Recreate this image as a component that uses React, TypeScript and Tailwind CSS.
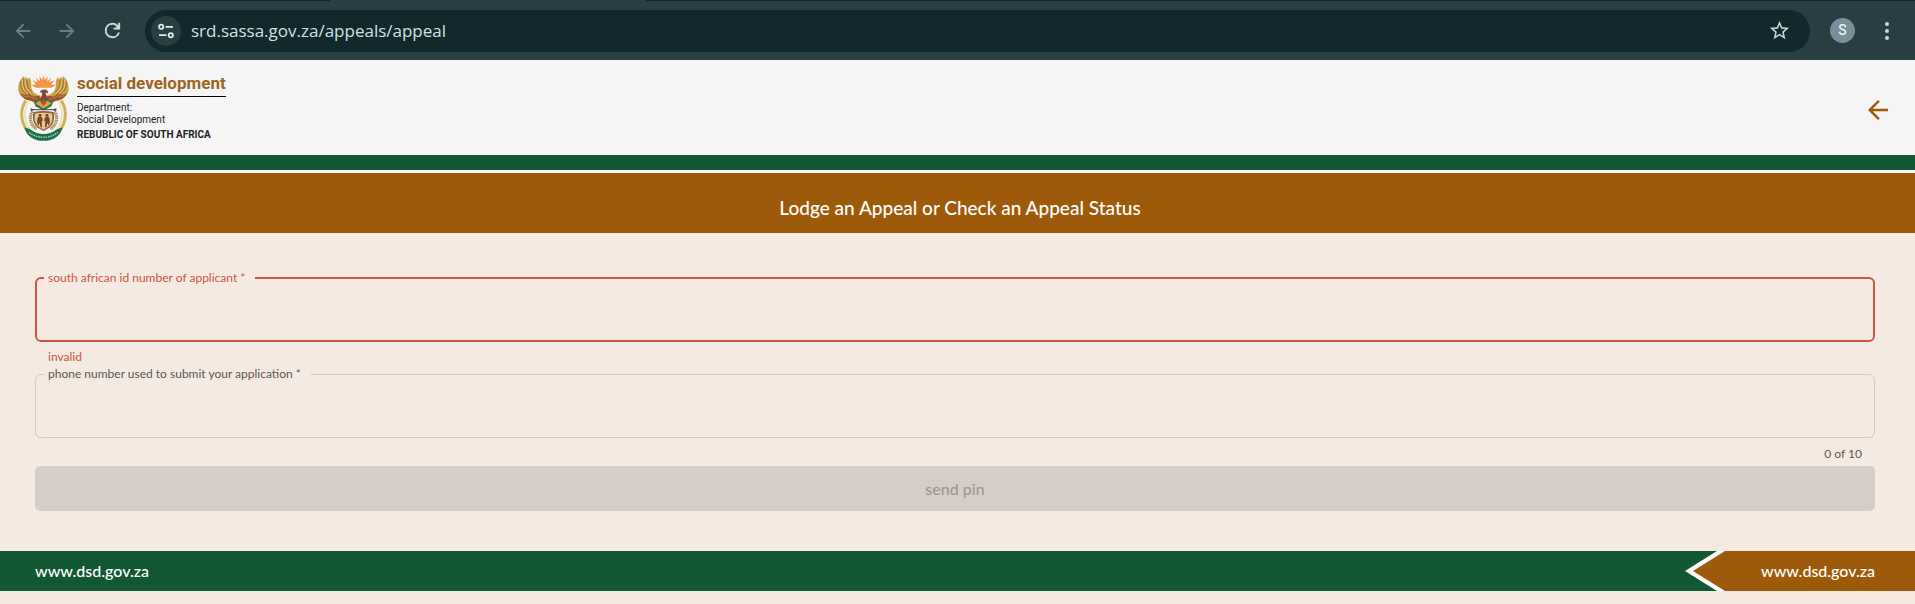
import { useState } from 'react';
import type { ReactNode } from 'react';

type IconProps = { className?: string };

function BackIcon({ className }: IconProps) {
  return (
    <svg viewBox="0 0 24 24" className={className} fill="currentColor" aria-hidden="true">
      <path d="M20 11H7.83l5.59-5.59L12 4l-8 8 8 8 1.41-1.41L7.83 13H20v-2z" />
    </svg>
  );
}

function ReloadIcon({ className }: IconProps) {
  return (
    <svg viewBox="0 0 24 24" className={className} fill="currentColor" aria-hidden="true">
      <path d="M17.65 6.35A7.96 7.96 0 0 0 12 4a8 8 0 1 0 7.73 10h-2.08A6 6 0 1 1 12 6c1.66 0 3.14.69 4.22 1.78L15 9h-2v2h7V4h-2v2z" />
    </svg>
  );
}

function TuneIcon({ className }: IconProps) {
  return (
    <svg viewBox="0 0 18 18" className={className} fill="none" stroke="currentColor" strokeWidth="1.8" aria-hidden="true">
      <circle cx="4.2" cy="4.8" r="2.1" />
      <path d="M8.5 4.8H16M2 13.2h7.5" />
      <circle cx="13.8" cy="13.2" r="2.1" />
    </svg>
  );
}

function StarIcon({ className }: IconProps) {
  return (
    <svg viewBox="0 0 24 24" className={className} fill="currentColor" aria-hidden="true">
      <path d="M22 9.24l-7.19-.62L12 2 9.19 8.63 2 9.24l5.46 4.73L5.82 21 12 17.27 18.18 21l-1.63-7.03L22 9.24zM12 15.4l-3.76 2.27 1-4.28-3.32-2.88 4.38-.38L12 6.1l1.71 4.04 4.38.38-3.32 2.88 1 4.28L12 15.4z" />
    </svg>
  );
}

function WingHalf() {
  return (
    <g>
      <path d="M8 26C2 34 2 48 10 57" stroke="#d3ae52" strokeWidth="3" fill="none" />
      <path d="M10.500 27C5.500 36 6 47 12 55" stroke="#f0e2b4" strokeWidth="1.800" fill="none" />
      <path d="M15 37c-4 5-3 13 4 18" stroke="#a88a5c" strokeWidth="3.200" strokeDasharray="1.600 .6" fill="none" />
      <path d="M6 1C2 4-.5 10 .5 16c1 5 5 8 11 9l11 3 1-7c-6-1-10-5-10-10 0-4 0-7-2.500-9L10 5 8 1.500 7 4z" fill="#cba046" />
      <path d="M3 6c-1 7 2 12 9 15M6 4c-1 7 1 12 7 16M9 4c0 6 1 10 5 13" stroke="#8d5a26" strokeWidth=".8" fill="none" />
      <path d="M4.500 5c-1 7 1 12 8 15.500M7.500 4c-.5 6 1 11 6 15" stroke="#eed9a0" strokeWidth=".7" fill="none" />
      <path d="M2 18c3 3 6 2 9 1 3 2 7 3 11 2l1 8-6-1-4-2c-5 0-9-3-11-8z" fill="#96562c" />
      <path d="M5 21l6 1.500M9 20l7 4M13 20l7 5" stroke="#d39b52" strokeWidth=".7" />
    </g>
  );
}

function CoatOfArms({ className }: IconProps) {
  return (
    <svg viewBox="0 0 52 67" className={className} role="img" aria-label="Coat of arms of South Africa">
      <path d="M26 0l1.300 5L30 1.500l-.2 5 4-4-2 5 5.500-2.200-3.800 4.200L38.500 10l-4.500 2.500H18L13.500 10l5 -.5-3.800-4.200 5.500 2.200-2-5 4 4-.2-5L24.700 5z" fill="#ef9148" />
      <path d="M18.500 12.500a7.500 6.500 0 0 1 15 0z" fill="#f29a3e" />
      <WingHalf />
      <g transform="matrix(-1 0 0 1 52 0)">
        <WingHalf />
      </g>
      <path d="M22 17.500c1-3 6-4 8-1.500l1 2.500-3-.5c1 3 2 6 4 9H20c3-3 5-6 4.500-9z" fill="#7d4a30" />
      <path d="M28 16.500l3 2-3-.2z" fill="#c8432e" />
      <path d="M16 27l10-2 10 2-2 5-8 4-8-4z" fill="#2f7a4b" />
      <path d="M18 29l4-3 4 3 4-3 4 3-8 5z" fill="#dca24c" />
      <path d="M23 28l3-3 3 3-3 3.500z" fill="#c14d35" />
      <path d="M13 35.200h26" stroke="#3c4652" strokeWidth="1" />
      <path d="M13 33.800l4.500 1.400-4.500 1.400zM39 33.800l-4.500 1.400 4.500 1.400z" fill="#3c4652" />
      <path d="M16 37.500c7-1.200 13-1.200 20 0 2.500 8 0 15-10 19.500C16 52.500 13.500 45.500 16 37.500z" fill="#8f5f37" />
      <path d="M17.500 39c6-1 11-1 17 0 1.800 6.500 0 12.500-8.500 16.500C17.500 51.500 15.700 45.500 17.500 39z" fill="#e9c78d" />
      <circle cx="22.500" cy="41" r="1.500" fill="#6e3c22" />
      <circle cx="29.500" cy="41" r="1.500" fill="#6e3c22" />
      <path d="M20.500 42.500h3.500l1.500 3.500-1.300 1 .3 6h-1.500l-1-4.500-1 3c-2-2.500-2-5.500-.5-9zM31.500 42.500H28L26.500 46l1.300 1-.3 6H29l1-4.500 1 3c2-2.500 2-5.500.5-9z" fill="#7d4727" />
      <path d="M6.500 53c2 1.500 5 1 7 3 7 5.500 18 5.500 25 0 2-2 5-1.500 7-3-2 8.500-9 14-19.500 14S8.500 61.500 6.500 53z" fill="#1f7048" />
      <path d="M11.500 58.500c8 6.500 21 6.500 29 0" stroke="#b9d6bd" strokeWidth="1.300" strokeDasharray="1.600 .9" fill="none" />
    </svg>
  );
}

function BrowserBar() {
  return (
    <div className="bg-[#283e42]">
      <div className="h-px bg-[#10262a]">
        <div className="ml-[330px] h-px w-[316px] bg-[#283e42]" />
      </div>
      <div className="flex h-[59px] items-center font-['Open_Sans','Noto_Sans',sans-serif]">
        <button type="button" aria-label="Back" className="ml-3 text-[#6c8084]">
          <BackIcon className="size-[22px]" />
        </button>
        <button type="button" aria-label="Forward" className="ml-[22px] text-[#6c8084]">
          <BackIcon className="size-[22px] rotate-180" />
        </button>
        <button type="button" aria-label="Reload" className="ml-[23px] text-[#c9dadb]">
          <ReloadIcon className="size-[23px]" />
        </button>
        <div className="ml-[21px] flex h-[42px] flex-1 items-center rounded-full bg-[#11292c] pr-[19px] pl-[6px]">
          <button
            type="button"
            aria-label="View site information"
            className="flex size-[30px] shrink-0 items-center justify-center rounded-full bg-[#283e42] text-[#dcebec]"
          >
            <TuneIcon className="size-[18px]" />
          </button>
          <input
            type="text"
            aria-label="Address"
            defaultValue="srd.sassa.gov.za/appeals/appeal"
            className="ml-[10px] min-w-0 flex-1 bg-transparent text-[17px] leading-6 text-[#d3e0e1] outline-none"
          />
          <button type="button" aria-label="Bookmark this page" className="text-[#c9dadb]">
            <StarIcon className="size-[23px]" />
          </button>
        </div>
        <button
          type="button"
          aria-label="Profile"
          className="ml-5 flex size-[25px] items-center justify-center rounded-full bg-[#78909c] font-['Roboto',sans-serif] text-[14px] text-white"
        >
          S
        </button>
        <button type="button" aria-label="Menu" className="mr-4 ml-5 text-[#c9dadb]">
          <svg viewBox="0 0 24 24" className="size-6" fill="currentColor" aria-hidden="true">
            <circle cx="12" cy="5" r="2" />
            <circle cx="12" cy="12" r="2" />
            <circle cx="12" cy="19" r="2" />
          </svg>
        </button>
      </div>
    </div>
  );
}

function SiteHeader() {
  return (
    <header className="flex items-center justify-between bg-[#f5f5f5] pt-[14px] pr-[22px] pb-[13px] pl-[18px]">
      <div className="flex items-start gap-2 font-['Roboto',sans-serif] text-[#222]">
        <CoatOfArms className="h-[68px] w-[51px]" />
        <div>
          <p className="border-b border-black pb-[3px] text-[17px] leading-[19px] font-bold text-[#9c6420]">
            social development
          </p>
          <p className="mt-[5px] text-[10px] leading-3">
            Department:
            <br />
            Social Development
          </p>
          <p className="mt-[3px] text-[10px] leading-3 font-bold">REBUBLIC OF SOUTH AFRICA</p>
        </div>
      </div>
      <button type="button" aria-label="Go back" className="pt-1 text-[#9e5a0b]">
        <BackIcon className="size-[30px]" />
      </button>
    </header>
  );
}

type FieldProps = {
  id: string;
  label: string;
  hint: ReactNode;
  maxLength: number;
  invalid?: boolean;
  value: string;
  onChange: (value: string) => void;
};

function OutlinedField({ id, label, hint, maxLength, invalid, value, onChange }: FieldProps) {
  return (
    <div className="text-[12px] leading-4">
      <fieldset
        className={
          invalid
            ? 'h-[72px] min-w-0 rounded-[6px] border-2 border-[#cd5444] pl-[7px]'
            : 'h-[72px] min-w-0 rounded-[6px] border border-[#d3cac4] pl-2'
        }
      >
        <legend className={invalid ? 'pr-2.5 pl-1 text-[#cd5444]' : 'pr-2.5 pl-1 text-[#5c5753]'}>
          <label htmlFor={id}>{label} *</label>
        </legend>
        <input
          id={id}
          type="text"
          inputMode="numeric"
          required
          maxLength={maxLength}
          aria-invalid={invalid}
          aria-describedby={`${id}-hint`}
          value={value}
          onChange={(event) => onChange(event.target.value)}
          className="h-12 w-full bg-transparent px-1 text-base outline-none"
        />
      </fieldset>
      <p
        id={`${id}-hint`}
        className={invalid ? 'px-[13px] pt-[7px] pb-px text-[#cd5444]' : 'px-[13px] pt-2 text-right text-[#5c5753]'}
      >
        {hint}
      </p>
    </div>
  );
}

export default function App() {
  const [idNumber, setIdNumber] = useState('');
  const [phone, setPhone] = useState('');

  return (
    <div className="min-h-screen bg-[#f4eae1] font-['Lato',sans-serif]">
      <BrowserBar />
      <SiteHeader />
      <div className="h-[15px] bg-[#115833]" />
      <h1 className="flex h-[63px] items-center justify-center border-t-[3px] border-white bg-[#9e5a0b] pt-2.5 pr-10 pl-[45px] text-[19px] leading-6 font-medium text-white">
        Lodge an Appeal or Check an Appeal Status
      </h1>
      <form className="pt-[37px] pr-10 pb-10 pl-[35px]" onSubmit={(event) => event.preventDefault()}>
        <OutlinedField
          id="id-number"
          label="south african id number of applicant"
          hint="invalid"
          maxLength={13}
          invalid
          value={idNumber}
          onChange={setIdNumber}
        />
        <OutlinedField
          id="phone-number"
          label="phone number used to submit your application"
          hint={`${phone.length} of 10`}
          maxLength={10}
          value={phone}
          onChange={setPhone}
        />
        <button
          type="submit"
          disabled
          className="mt-1 h-[45px] w-full rounded-[5px] bg-[#d7cdc8] text-base font-medium text-[#a0958e]"
        >
          send pin
        </button>
      </form>
      <footer className="flex h-10 items-stretch justify-between bg-[#115833] text-[16px] font-medium text-white">
        <a href="https://www.dsd.gov.za" className="flex items-center pl-[35px]">
          www.dsd.gov.za
        </a>
        <div className="flex">
          <svg viewBox="0 0 40 40" className="h-10 w-10" aria-hidden="true">
            <path d="M32 0h8v40h-8L0 20z" fill="#fff" />
            <path d="M40 0v40L8 20z" fill="#9e5a0b" />
          </svg>
          <a href="https://www.dsd.gov.za" className="flex items-center bg-[#9e5a0b] pr-10 pl-9">
            www.dsd.gov.za
          </a>
        </div>
      </footer>
    </div>
  );
}
